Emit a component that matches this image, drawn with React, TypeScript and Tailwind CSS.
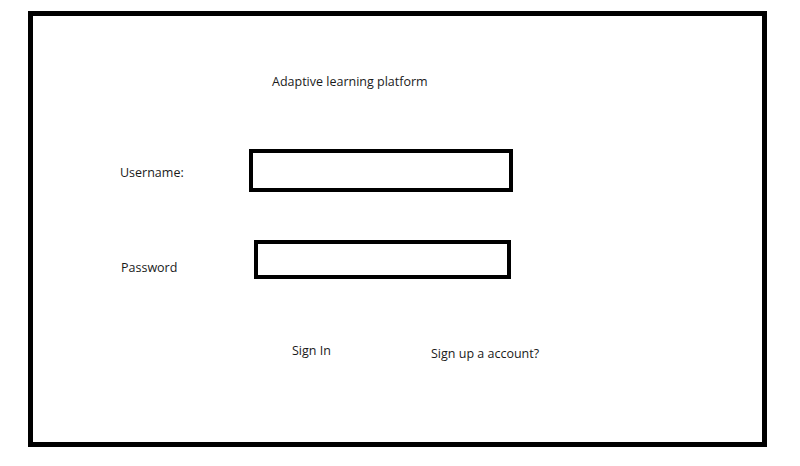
import React from 'react';

const App: React.FC = () => {
  return (
    <div className="w-[800px] h-[466px] bg-white font-['Open_Sans',sans-serif] text-[12.5px] text-[#1a1a1a] pt-[11px] pl-[28px]">
      {/* Frame */}
      <div className="w-[739px] h-[436px] border-[5px] border-black flex flex-col">
        <p className="mt-[57px] ml-[239px] leading-[18px]">Adaptive learning platform</p>

        {/* Username */}
        <div className="mt-[58px] flex items-start">
          <label className="mt-[15px] ml-[87px] w-[129px] leading-[18px]">Username:</label>
          <div className="w-[264px] h-[43px] border-[4.5px] border-black" />
        </div>

        {/* Password */}
        <div className="mt-[48px] flex items-start">
          <label className="mt-[19px] ml-[88px] w-[133px] leading-[18px]">Password</label>
          <div className="w-[257px] h-[39px] border-[4.5px] border-black" />
        </div>

        {/* Actions */}
        <div className="mt-[63px] flex items-start">
          <button className="ml-[259px] w-[139px] text-left leading-[18px]">Sign In</button>
          <button className="mt-[3px] leading-[18px]">Sign up a account?</button>
        </div>
      </div>
    </div>
  );
};

export default App;
